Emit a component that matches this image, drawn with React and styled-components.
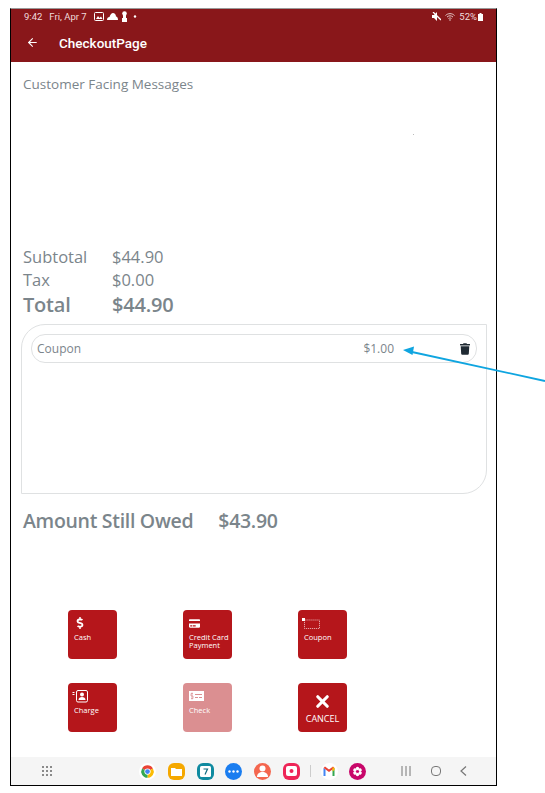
import React from "react";
import styled, { createGlobalStyle } from "styled-components";
import { FaTrash, FaCreditCard, FaDollarSign } from "react-icons/fa";
import { ArrowLeft, X } from "lucide-react";

const Global = createGlobalStyle`
  html, body { margin: 0; padding: 0; background: #fff; }
  body { width: 545px; height: 793px; overflow: hidden; position: relative; font-family: "Open Sans", "Liberation Sans", sans-serif; }
`;
const Frame = styled.div`
  box-sizing: border-box;
  width: 487px;
  height: 778px;
  margin: 8px 0 0 10px;
  border: 1.5px solid #000;
  border-top-color: #999;
  display: flex;
  flex-direction: column;
`;
const Header = styled.header`
  background: #89171a;
  height: 53px;
  flex: none;
  color: #fff;
  display: flex;
  flex-direction: column;
`;
const StatusBar = styled.div`
  height: 15px;
  padding: 0 13px 0 13px;
  display: flex;
  align-items: center;
  font: 9.5px "Roboto", sans-serif;
  color: #f0dcdc;
`;
const StatusGroup = styled.div`
  display: flex;
  align-items: center;
  gap: ${(p) => p.$gap || 3}px;
  margin-left: ${(p) => (p.$end ? "auto" : "0")};
`;
const Toolbar = styled.div`
  flex: 1;
  display: flex;
  align-items: center;
  padding: 0 0 1px 15px;
  gap: 20px;
  font: 500 13.5px "Roboto", sans-serif;
`;
const Content = styled.main`
  flex: 1;
  display: flex;
  flex-direction: column;
  padding: 13px 9px 0 10px;
  color: #7b858b;
`;
const Messages = styled.div`
  font-size: 13.5px;
  line-height: 19px;
  height: 170px;
  padding-left: 2px;
  position: relative;
`;
const Speck = styled.span`
  position: absolute;
  left: 392px;
  top: 59px;
  width: 1px;
  height: 1px;
  background: #bbb;
`;
const SummaryRow = styled.div`
  display: grid;
  grid-template-columns: 89px auto;
  padding-left: 2px;
  font-size: ${(p) => p.$size}px;
  font-weight: ${(p) => p.$weight || 400};
  line-height: ${(p) => p.$line}px;
  letter-spacing: ${(p) => p.$track || 0}px;
`;
const CouponBox = styled.section`
  box-sizing: border-box;
  height: 170px;
  margin-top: 5px;
  border: 1px solid #dfe1e2;
  border-radius: 24px 0 24px 0;
  padding: 9px 9px;
`;
const CouponRow = styled.div`
  box-sizing: border-box;
  height: 29px;
  border: 1px solid #dfe1e2;
  border-radius: 14px;
  display: flex;
  align-items: center;
  padding: 0 6px 0 5px;
  font-size: 12px;
`;
const CouponName = styled.span`
  flex: 1;
`;
const CouponPrice = styled.span`
  margin-right: 66px;
`;
const Trash = styled(FaTrash)`
  width: 10px;
  height: 12px;
  color: #1f2a33;
`;
const Owed = styled.div`
  display: flex;
  gap: 25px;
  padding: 13px 0 0 2px;
  font-size: 19.5px;
  font-weight: 600;
  line-height: 28px;
  letter-spacing: -0.3px;
`;
const ButtonGrid = styled.div`
  display: grid;
  grid-template-columns: repeat(3, 49px);
  grid-auto-rows: 49px;
  column-gap: 66px;
  row-gap: 24px;
  padding: 75px 0 0 47px;
`;
const PayButton = styled.button`
  box-sizing: border-box;
  border: 0;
  margin: 0;
  padding: 6px 0 0 6px;
  background: #b5161b;
  opacity: ${(p) => (p.$faded ? 0.48 : 1)};
  border-radius: 4px;
  color: #fff;
  font: 500 7.5px/8px "Open Sans", sans-serif;
  text-align: left;
  display: flex;
  flex-direction: column;
  align-items: flex-start;
`;
const ButtonIcon = styled.span`
  height: 14px;
  display: flex;
  align-items: center;
  margin-bottom: 3px;
`;
const CancelButton = styled(PayButton)`
  align-items: center;
  padding: 9px 0 0;
  font-size: 9px;
`;
const CancelLabel = styled.span`
  margin-top: 4px;
`;
const NavBar = styled.footer`
  flex: none;
  height: 28px;
  background: #f5f5f5;
  display: flex;
  align-items: center;
  padding-left: 31px;
  position: relative;
`;
const Apps = styled.div`
  display: flex;
  align-items: center;
  gap: 11.8px;
  margin-left: 86px;
`;
const AppIcon = styled.span`
  width: 17px;
  height: 17px;
  flex: none;
  display: flex;
  align-items: center;
  justify-content: center;
  border-radius: ${(p) => p.$r || "50%"};
  background: ${(p) => p.$bg};
`;
const Divider = styled.span`
  width: 1px;
  height: 12px;
  background: #ccc;
  margin: 0 -2px;
`;
const SysNav = styled.div`
  display: flex;
  align-items: center;
  gap: 19.5px;
  margin-left: 35px;
`;
const Overlay = styled.svg`
  position: absolute;
  left: 0;
  top: 0;
  pointer-events: none;
`;

const Buttons = [
  { label: "Cash", icon: <FaDollarSign size={12} /> },
  { label: "Credit Card Payment", icon: <FaCreditCard size={11} /> },
  {
    label: "Coupon",
    icon: (
      <svg width="18" height="13" viewBox="0 0 18 13" style={{ marginLeft: -2 }}>
        <rect x="2.5" y="3" width="15" height="8.5" fill="none" stroke="#fff" strokeWidth=".6" strokeDasharray="1.2 .8" />
        <path d="M0 1h3v3H0z" fill="#fff" />
      </svg>
    ),
  },
  {
    label: "Charge",
    icon: (
      <svg width="16" height="13" viewBox="0 0 16 13" style={{ marginLeft: -2 }}>
        <rect x="4.5" y=".5" width="11" height="11.5" rx="1.5" fill="none" stroke="#fff" />
        <circle cx="10" cy="4.5" r="2" fill="#fff" />
        <path d="M6.5 10c0-2 1.500-3 3.500-3s3.500 1 3.500 3z" fill="#fff" />
        <path d="M.5 2h2v1H.5zM.5 4h2v1H.5z" fill="#fff" />
      </svg>
    ),
  },
  {
    label: "Check",
    faded: true,
    icon: (
      <svg width="15" height="10" viewBox="0 0 15 10">
        <rect width="15" height="10" fill="#fff" />
        <path d="M6 3h7v1H6zM6 6h3v1H6zM10 6h3v1h-3z" fill="#b5161b" />
        <path d="M4 2.500H2v2.500h2v2.500H2M3 1.500v7" fill="none" stroke="#b5161b" strokeWidth=".7" />
      </svg>
    ),
  },
];

const Dots = () => (
  <svg width="11" height="11" viewBox="0 0 11 11">
    {[0, 4, 8].flatMap((y) =>
      [0, 4, 8].map((x) => <rect key={`${x}-${y}`} x={x} y={y} width="2" height="2" fill="#8a8a8a" />)
    )}
  </svg>
);

const Chrome = () => (
  <svg width="15" height="15" viewBox="0 0 24 24">
    <path d="M12 12 3.300 7A10 10 0 0 1 20.700 7z" fill="#ea4335" />
    <path d="M12 12 20.700 7A10 10 0 0 1 12 22z" fill="#fbbc04" />
    <path d="M12 12 12 22A10 10 0 0 1 3.300 7z" fill="#34a853" />
    <circle cx="12" cy="12" r="5" fill="#fff" />
    <circle cx="12" cy="12" r="3.800" fill="#4285f4" />
  </svg>
);

const Gmail = () => (
  <svg width="12" height="10" viewBox="0 0 24 20">
    <path d="M1 20V4l4 3v13z" fill="#4285f4" />
    <path d="M23 20V4l-4 3v13z" fill="#34a853" />
    <path d="M1 4l11 8 11-8-3-3-8 6-8-6z" fill="#ea4335" />
    <path d="M19 2l4 2v4l-4 3z" fill="#fbbc04" />
  </svg>
);

const Flower = () => (
  <svg width="11" height="11" viewBox="0 0 11 11">
    {[0, 60, 120, 180, 240, 300].map((a) => (
      <circle key={a} cx="5.500" cy="2.500" r="1.700" fill="#fff" transform={`rotate(${a} 5.500 5.500)`} />
    ))}
  </svg>
);

export default function App() {
  return (
    <>
      <Global />
      <Frame>
        <Header>
          <StatusBar>
            <StatusGroup $gap={7}>
              <span>9:42</span>
              <span>Fri, Apr 7</span>
              <StatusGroup $gap={3}>
                <svg width="10" height="9" viewBox="0 0 10 9"><rect x=".5" y=".5" width="9" height="8" rx="1" fill="none" stroke="#fff" /><path d="M2 7l2-3 1.500 2L7 4.500 8.500 7z" fill="#fff" /></svg>
                <svg width="11" height="7" viewBox="0 0 11 7"><path d="M0 7c0-2 1-3 2.500-3C3 2 4.500 0 6 0s3 1.500 3 3.500c1.200 0 2 1.500 2 3.500z" fill="#fff" /></svg>
                <svg width="7" height="11" viewBox="0 0 7 11"><circle cx="3.500" cy="2.500" r="2.300" fill="#fff" /><path d="M2 4h3v3h1v4H1V7h1z" fill="#fff" /></svg>
                <svg width="8" height="3" viewBox="0 0 8 3" style={{ marginLeft: 2 }}><circle cx="2" cy="1.500" r="1.200" fill="#fff" /></svg>
              </StatusGroup>
            </StatusGroup>
            <StatusGroup $end $gap={4}>
              <svg width="9" height="9" viewBox="0 0 9 9"><path d="M0 3h2l3-3v9L2 6H0z" fill="#fff" /><path d="M1 0l8 8" stroke="#fff" strokeWidth="1.300" /></svg>
              <svg width="10" height="9" viewBox="0 0 10 9"><path d="M.5 3.500C3 1 7 1 9.500 3.500M2 5c2-1.600 4-1.600 6 0M3.500 6.500c1-.7 2-.7 3 0" fill="none" stroke="#e4c9c9" /><circle cx="5" cy="8" r=".8" fill="#e4c9c9" /></svg>
              <span>52%</span>
              <svg width="5" height="8" viewBox="0 0 5 8" style={{ marginLeft: -3 }}><path d="M1.500 0h2v1H5v7H0V1h1.500z" fill="#fff" /></svg>
            </StatusGroup>
          </StatusBar>
          <Toolbar>
            <ArrowLeft size={13} strokeWidth={2} />
            <span>CheckoutPage</span>
          </Toolbar>
        </Header>
        <Content>
          <Messages>
            Customer Facing Messages
            <Speck />
          </Messages>
          <SummaryRow $size={16.5} $line={23}>
            <span>Subtotal</span>
            <span>$44.90</span>
          </SummaryRow>
          <SummaryRow $size={16.5} $line={23}>
            <span>Tax</span>
            <span>$0.00</span>
          </SummaryRow>
          <SummaryRow $size={20} $line={28} $weight={600} $track={-0.2}>
            <span>Total</span>
            <span>$44.90</span>
          </SummaryRow>
          <CouponBox>
            <CouponRow>
              <CouponName>Coupon</CouponName>
              <CouponPrice>$1.00</CouponPrice>
              <Trash />
            </CouponRow>
          </CouponBox>
          <Owed>
            <span>Amount Still Owed</span>
            <span>$43.90</span>
          </Owed>
          <ButtonGrid>
            {Buttons.map((b) => (
              <PayButton key={b.label} $faded={b.faded}>
                <ButtonIcon>{b.icon}</ButtonIcon>
                {b.label}
              </PayButton>
            ))}
            <CancelButton>
              <X size={19} strokeWidth={4} />
              <CancelLabel>CANCEL</CancelLabel>
            </CancelButton>
          </ButtonGrid>
        </Content>
        <NavBar>
          <Dots />
          <Apps>
            <AppIcon $bg="#fff"><Chrome /></AppIcon>
            <AppIcon $bg="#f5a800" $r="6px">
              <svg width="11" height="9" viewBox="0 0 11 9"><path d="M0 1h4l1 1h6v7H0z" fill="#fff" /></svg>
            </AppIcon>
            <AppIcon $bg="#0f8aa0" $r="6px">
              <svg width="11" height="11" viewBox="0 0 11 11"><rect width="11" height="11" rx="1.500" fill="#fff" /><path d="M3.500 3h4L5 8.500" fill="none" stroke="#0f6a80" strokeWidth="1.200" /></svg>
            </AppIcon>
            <AppIcon $bg="#1a7df0">
              <svg width="11" height="3" viewBox="0 0 11 3"><circle cx="1.500" cy="1.500" r="1.200" fill="#fff" /><circle cx="5.500" cy="1.500" r="1.200" fill="#fff" /><circle cx="9.500" cy="1.500" r="1.200" fill="#fff" /></svg>
            </AppIcon>
            <AppIcon $bg="#f4664e">
              <svg width="11" height="12" viewBox="0 0 11 12"><circle cx="5.500" cy="3.500" r="3" fill="#fff" /><path d="M0 12c0-3.500 2.500-5 5.500-5s5.500 1.500 5.500 5z" fill="#fff" /></svg>
            </AppIcon>
            <AppIcon $bg="#ee2557" $r="6px">
              <svg width="11" height="10" viewBox="0 0 11 10"><rect width="11" height="10" rx="2" fill="#fff" /><circle cx="5.500" cy="5" r="2" fill="#ee2557" /></svg>
            </AppIcon>
            <Divider />
            <AppIcon $bg="#fff"><Gmail /></AppIcon>
            <AppIcon $bg="#c8076a"><Flower /></AppIcon>
          </Apps>
          <SysNav>
            <svg width="10" height="10" viewBox="0 0 10 10"><path d="M1 0v10M5 0v10M9 0v10" stroke="#777" strokeWidth="1" /></svg>
            <svg width="10" height="10" viewBox="0 0 10 10"><rect x=".5" y=".5" width="9" height="9" rx="3.500" fill="none" stroke="#777" /></svg>
            <svg width="7" height="10" viewBox="0 0 7 10"><path d="M6 .5 1 5l5 4.500" fill="none" stroke="#777" strokeWidth="1.200" /></svg>
          </SysNav>
        </NavBar>
      </Frame>
      <Overlay width="545" height="793" viewBox="0 0 545 793">
        <path d="M545 381 412 352" stroke="#0fa5e0" strokeWidth="1.800" />
        <path d="M403 350 414 346.500 412.500 355z" fill="#0fa5e0" />
      </Overlay>
    </>
  );
}
